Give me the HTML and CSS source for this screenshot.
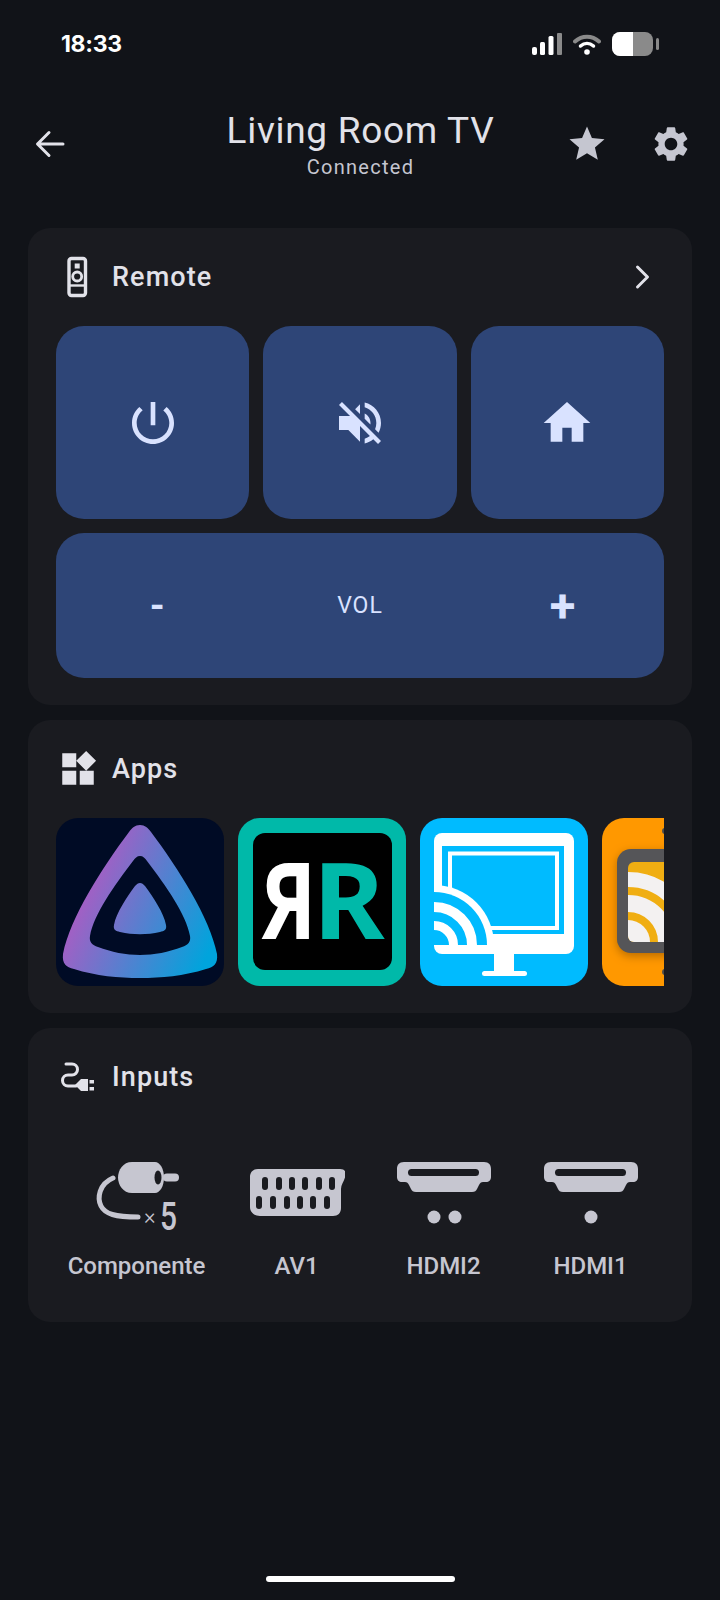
FILE: index.html
```html
<!DOCTYPE html>
<html lang="en">
<head>
    <meta charset="UTF-8">
    <meta name="viewport" content="width=device-width, initial-scale=1.0">
    <title>Living Room TV</title>
    <link rel="stylesheet" href="styles.css">
</head>
<body>
    <div class="status">
        <span class="status-time">18:33</span>
        <div class="status-icons">
            <svg class="signal" width="31" height="22" viewBox="0 0 31 22">
                <rect x="1" y="14" width="5" height="8" rx="2" fill="#fff"/>
                <rect x="9" y="9" width="5" height="13" rx="1.5" fill="#fff"/>
                <rect x="17.500" y="3" width="5" height="19" rx="1.5" fill="#fff"/>
                <rect x="26" y="0" width="5" height="22" rx="1" fill="#8a8a8a"/>
            </svg>
            <svg class="wifi" width="28" height="22" viewBox="0 0 28 22">
                <path d="M2 8.500C9 2 19 2 26 8.500" fill="none" stroke="#8a8a8a" stroke-width="4" stroke-linecap="round"/>
                <path d="M7.500 13C11.500 9.500 16.500 9.500 20.500 13" fill="none" stroke="#fff" stroke-width="3.500" stroke-linecap="round"/>
                <circle cx="14" cy="19" r="2.800" fill="#fff"/>
            </svg>
            <svg class="battery" width="47" height="24" viewBox="0 0 47 24">
                <rect width="41" height="24" rx="8" fill="#8a8a8a"/>
                <path d="M8 0H21V24H8A8 8 0 0 1 0 16V8A8 8 0 0 1 8 0Z" fill="#fff"/>
                <rect x="44" y="6" width="3" height="12" rx="1.500" fill="#8a8a8a"/>
            </svg>
        </div>
    </div>

    <header class="topbar">
        <div class="topbar-left">
            <svg class="icon-42" viewBox="0 0 42 42"><path d="M34 21H9M20 9.500L8.500 21L20 32.500" fill="none" stroke="#e2e2e9" stroke-width="3" stroke-linecap="round" stroke-linejoin="round"/></svg>
        </div>
        <div class="topbar-title">
            <h1>Living Room TV</h1>
            <p>Connected</p>
        </div>
        <div class="topbar-right">
            <svg class="icon-42" viewBox="0 0 24 24"><path fill="#c5c6d0" d="M12 17.270L18.180 21l-1.640-7.030L22 9.240l-7.190-.610L12 2 9.190 8.630 2 9.240l5.460 4.730L5.820 21z"/></svg>
            <svg class="icon-42" viewBox="0 0 24 24"><path fill="#c5c6d0" d="M19.140 12.940c.04-.3.06-.61.06-.94 0-.32-.02-.64-.07-.94l2.030-1.580c.18-.14.23-.41.12-.61l-1.920-3.320c-.12-.22-.37-.29-.59-.22l-2.390.96c-.5-.38-1.030-.7-1.620-.94l-.36-2.540c-.04-.24-.24-.41-.48-.41h-3.840c-.24 0-.43.17-.47.41l-.36 2.540c-.59.24-1.130.57-1.620.94l-2.390-.96c-.22-.08-.47 0-.59.22L2.740 8.870c-.12.21-.08.47.12.61l2.030 1.580c-.05.3-.09.63-.09.94s.02.64.07.94l-2.030 1.580c-.18.14-.23.41-.12.61l1.920 3.320c.12.22.37.29.59.22l2.390-.96c.5.38 1.030.7 1.620.94l.36 2.540c.05.24.24.41.48.41h3.840c.24 0 .44-.17.47-.41l.36-2.540c.59-.24 1.130-.56 1.620-.94l2.390.96c.22.08.47 0 .59-.22l1.920-3.320c.12-.22.07-.47-.12-.61l-2.010-1.580zM12 15.600c-1.980 0-3.600-1.620-3.600-3.600s1.620-3.600 3.600-3.600 3.600 1.620 3.600 3.600-1.620 3.600-3.600 3.600z"/></svg>
        </div>
    </header>

    <main class="cards">
        <section class="card">
            <div class="card-head">
                <svg class="icon-42" viewBox="0 0 42 42">
                    <rect x="12" y="2.500" width="16.500" height="37" rx="2.500" fill="none" stroke="#e2e2e9" stroke-width="3.400"/>
                    <rect x="17.700" y="7.500" width="5" height="5" fill="#e2e2e9"/>
                    <circle cx="20.200" cy="20.500" r="4.500" fill="none" stroke="#e2e2e9" stroke-width="2.800"/>
                    <path d="M13 29.500H27" stroke="#e2e2e9" stroke-width="2.400"/>
                </svg>
                <h2>Remote</h2>
                <svg class="icon-42 head-chevron" viewBox="0 0 42 42"><path d="M15.500 11L25.500 21L15.500 31" fill="none" stroke="#e2e2e9" stroke-width="3" stroke-linecap="round" stroke-linejoin="round"/></svg>
            </div>
            <div class="remote-grid">
                <button class="remote-btn">
                    <svg class="icon-56" viewBox="0 0 24 24"><path d="M13 3h-2v10h2V3zm4.830 2.170l-1.420 1.420C17.990 7.860 19 9.810 19 12c0 3.870-3.130 7-7 7s-7-3.130-7-7c0-2.190 1.010-4.140 2.580-5.420L6.170 5.170C4.230 6.820 3 9.260 3 12c0 4.970 4.030 9 9 9s9-4.030 9-9c0-2.740-1.230-5.180-3.170-6.830z"/></svg>
                </button>
                <button class="remote-btn">
                    <svg class="icon-56" viewBox="0 0 24 24"><path d="M16.500 12c0-1.770-1.020-3.290-2.500-4.030v2.210l2.450 2.450c.03-.2.05-.41.05-.63zm2.500 0c0 .94-.2 1.820-.54 2.640l1.510 1.510C20.630 14.910 21 13.500 21 12c0-4.280-2.990-7.860-7-8.770v2.060c2.890.86 5 3.540 5 6.710zM4.270 3L3 4.270 7.730 9H3v6h4l5 5v-6.730l4.250 4.250c-.67.52-1.420.93-2.250 1.180v2.060c1.380-.31 2.630-.95 3.690-1.810L19.730 21 21 19.730l-9-9L4.270 3zM12 4L9.910 6.090 12 8.180V4z"/></svg>
                </button>
                <button class="remote-btn">
                    <svg class="icon-56" viewBox="0 0 24 24"><path d="M10 20v-6h4v6h5v-8h3L12 3 2 12h3v8z"/></svg>
                </button>
                <div class="volume">
                    <span class="volume-minus">-</span>
                    <span class="volume-label">VOL</span>
                    <span class="volume-plus">+</span>
                </div>
            </div>
        </section>

        <section class="card">
            <div class="card-head">
                <svg class="icon-42" viewBox="0 0 24 24"><path fill="#e2e2e9" d="M13 13v8h8v-8h-8zM3 21h8v-8H3v8zM3 3v8h8V3H3zm13.660-1.310L11 7.340 16.660 13l5.660-5.660-5.660-5.650z"/></svg>
                <h2>Apps</h2>
            </div>
            <div class="app-row">
                <svg class="app-tile" viewBox="0 0 168 168">
                    <defs>
                        <linearGradient id="jelly" gradientUnits="userSpaceOnUse" x1="25" y1="70" x2="155" y2="130">
                            <stop offset="0" stop-color="#aa5cc3"/>
                            <stop offset="1" stop-color="#00a4dc"/>
                        </linearGradient>
                    </defs>
                    <rect width="168" height="168" fill="#000b25"/>
                    <path fill="url(#jelly)" fill-rule="evenodd" d="M84 7C89 7 92 10 95 14C122 50 154 100 161 136C162 146 158 149 150 151C128 158 105 160 84 160C63 160 40 158 18 151C10 149 6 146 7 136C14 100 46 50 73 14C76 10 79 7 84 7ZM84 38C81 38 79 40 77 43C58 68 38 96 34 118C33 124 36 127 42 129C55 134 70 137 84 137C98 137 113 134 126 129C132 127 135 124 134 118C130 96 110 68 91 43C89 40 87 38 84 38Z"/>
                    <path fill="url(#jelly)" d="M84 65C82 65 81 66 79 68C71 79 60 95 58 107C57 112 60 113 64 114C77 117 91 117 104 114C108 113 111 112 110 107C108 95 97 79 89 68C87 66 86 65 84 65Z"/>
                </svg>
                <svg class="app-tile" viewBox="0 0 168 168">
                    <rect width="168" height="168" fill="#00b9a9"/>
                    <rect x="15" y="15" width="139" height="137" rx="12" fill="#000"/>
                    <text class="rr-mark" transform="translate(22 121) scale(.78 1)" fill="#fff">Я</text>
                    <text class="rr-mark" transform="translate(75 121) scale(1.03 1)" fill="#00b9a9">R</text>
                </svg>
                <svg class="app-tile" viewBox="0 0 168 168">
                    <rect width="168" height="168" fill="#00bbff"/>
                    <rect x="14" y="15" width="140" height="121" rx="8" fill="#fff"/>
                    <rect x="74" y="130" width="20" height="26" fill="#fff"/>
                    <rect x="62" y="153" width="45" height="5" rx="2.500" fill="#fff"/>
                    <rect x="22" y="28" width="122" height="88" fill="#00bbff"/>
                    <rect x="30" y="35.500" width="107" height="74.500" fill="none" stroke="#fff" stroke-width="4"/>
                    <path d="M14 127V67A60 60 0 0 1 74 127Z" fill="#fff"/>
                    <path d="M14 127V74A53 53 0 0 1 67 127Z" fill="#00bbff"/>
                    <path d="M14 89A38 38 0 0 1 52 127" fill="none" stroke="#fff" stroke-width="10"/>
                    <path d="M14 107.500A19.500 19.500 0 0 1 33.500 127" fill="none" stroke="#fff" stroke-width="9"/>
                </svg>
                <svg class="app-tile" viewBox="0 0 168 168">
                    <rect width="168" height="168" fill="#ff9800"/>
                    <circle cx="63" cy="13" r="3" fill="#4c4c4c"/>
                    <circle cx="63" cy="154" r="3" fill="#4c4c4c"/>
                    <g class="rss-frame">
                        <rect x="15" y="31" width="138" height="104" rx="14" fill="#555558"/>
                    </g>
                    <rect x="26" y="44" width="116" height="80" rx="6" fill="#f0ae12"/>
                    <path d="M26 61.500A62.500 62.500 0 0 1 88.500 124" fill="none" stroke="#f3f1f1" stroke-width="15"/>
                    <path d="M26 85.500A38.500 38.500 0 0 1 64.500 124" fill="none" stroke="#f3f1f1" stroke-width="17"/>
                    <path d="M26 102V118A6 6 0 0 0 32 124H48A22 22 0 0 0 26 102Z" fill="#f3f1f1"/>
                </svg>
            </div>
        </section>

        <section class="card">
            <div class="card-head">
                <svg class="icon-42" viewBox="0 0 42 42">
                    <g transform="translate(4 6)">
                        <path d="M5 2H11A5 5 0 0 1 11 13H7A5.500 5.500 0 0 0 7 24H15" fill="none" stroke="#e2e2e9" stroke-width="3" stroke-linecap="round"/>
                        <path d="M14 23L20 17H27V29H20Z" fill="#e2e2e9"/>
                        <rect x="28.500" y="18" width="4.500" height="3.500" fill="#e2e2e9"/>
                        <rect x="28.500" y="25" width="4.500" height="3.500" fill="#e2e2e9"/>
                    </g>
                </svg>
                <h2>Inputs</h2>
            </div>
            <div class="input-grid">
                <div class="input-item">
                    <svg class="input-icon" viewBox="0 0 96 84">
                        <path d="M24 18C10 24 8 38 12 46C16 54 26 57 49 57" fill="none" stroke="#c6c6d0" stroke-width="5" stroke-linecap="round"/>
                        <path d="M43 2H66C71 2 75 9 75 17.500C75 26 71 33 66 33H43C34 33 29 25 29 17.500C29 10 34 2 43 2Z" fill="#c6c6d0"/>
                        <rect x="74" y="13.500" width="16" height="8" rx="4" fill="#c6c6d0"/>
                        <ellipse cx="69" cy="17.500" rx="3.500" ry="7" fill="#1a1b20"/>
                        <text class="x-times" x="55" y="64">×</text>
                        <text class="x-count" x="71" y="70" textLength="17" lengthAdjust="spacingAndGlyphs">5</text>
                    </svg>
                    <span>Componente</span>
                </div>
                <div class="input-item">
                    <svg class="input-icon" viewBox="0 0 96 84">
                        <path d="M9 9H91C95 9 97 11 96.500 15C96 20 92 24 92 29V48C92 53 89 56 84 56H11C5 56 1 52 1 47V17C1 12 4 9 9 9Z" fill="#c6c6d0"/>
                        <g fill="#1a1b20">
                            <rect x="13" y="17" width="6" height="13" rx="3"/>
                            <rect x="27" y="17" width="6" height="13" rx="3"/>
                            <rect x="40" y="17" width="6" height="13" rx="3"/>
                            <rect x="53" y="17" width="6" height="13" rx="3"/>
                            <rect x="67" y="17" width="6" height="13" rx="3"/>
                            <rect x="80" y="17" width="6" height="13" rx="3"/>
                            <rect x="7" y="36" width="6" height="13" rx="3"/>
                            <rect x="21" y="36" width="6" height="13" rx="3"/>
                            <rect x="35" y="36" width="6" height="13" rx="3"/>
                            <rect x="48" y="36" width="6" height="13" rx="3"/>
                            <rect x="61" y="36" width="6" height="13" rx="3"/>
                            <rect x="75" y="36" width="6" height="13" rx="3"/>
                        </g>
                    </svg>
                    <span>AV1</span>
                </div>
                <div class="input-item">
                    <svg class="input-icon" viewBox="0 0 96 84">
                        <path d="M8 2H88C93 2 95 5 95 9V17C95 20 93 22 90 22H87C85 22 84 23 83 25L81 29C80 31 79 32 76 32H20C17 32 16 31 15 29L13 25C12 23 11 22 9 22H6C3 22 1 20 1 17V9C1 5 3 2 8 2Z" fill="#c6c6d0"/>
                        <rect x="12" y="9" width="71" height="7" rx="3.500" fill="#1a1b20"/>
                        <circle cx="38" cy="57" r="6.500" fill="#c6c6d0"/>
                        <circle cx="59" cy="57" r="6.500" fill="#c6c6d0"/>
                    </svg>
                    <span>HDMI2</span>
                </div>
                <div class="input-item">
                    <svg class="input-icon" viewBox="0 0 96 84">
                        <path d="M8 2H88C93 2 95 5 95 9V17C95 20 93 22 90 22H87C85 22 84 23 83 25L81 29C80 31 79 32 76 32H20C17 32 16 31 15 29L13 25C12 23 11 22 9 22H6C3 22 1 20 1 17V9C1 5 3 2 8 2Z" fill="#c6c6d0"/>
                        <rect x="12" y="9" width="71" height="7" rx="3.500" fill="#1a1b20"/>
                        <circle cx="48" cy="57" r="6.500" fill="#c6c6d0"/>
                    </svg>
                    <span>HDMI1</span>
                </div>
            </div>
        </section>
    </main>

    <div class="home-bar"></div>
</body>
</html>
```

FILE: styles.css
```css
body {
    margin: 0;
    height: 1600px;
    overflow: hidden;
    background-color: #111318;
    color: #e2e2e9;
    font-family: Roboto, "Liberation Sans", sans-serif;
}
h1, h2, p {
    margin: 0;
    font-weight: 400;
}
svg {
    display: block;
    flex-shrink: 0;
}
.icon-42 {
    width: 42px;
    height: 42px;
}
.icon-56 {
    width: 56px;
    height: 56px;
    fill: #d9e2ff;
}

.status {
    display: flex;
    justify-content: space-between;
    align-items: center;
    height: 88px;
    padding: 0 61px;
}
.status-time {
    color: #fff;
    font-family: Inter, sans-serif;
    font-size: 23px;
    font-weight: 700;
    letter-spacing: -0.3px;
}
.status-icons {
    display: flex;
    align-items: center;
    gap: 11px;
}

.topbar {
    display: grid;
    grid-template-columns: 1fr auto 1fr;
    align-items: center;
    height: 112px;
    padding: 0 28px 0 29px;
}
.topbar-right {
    display: flex;
    justify-content: flex-end;
    gap: 42px;
}
.topbar-title {
    text-align: center;
}
.topbar-title h1 {
    font-size: 37px;
    line-height: 42px;
    letter-spacing: 0.7px;
}
.topbar-title p {
    margin-top: 3px;
    color: #c5c6d0;
    font-size: 20px;
    line-height: 24px;
    letter-spacing: 1.3px;
}

.cards {
    display: flex;
    flex-direction: column;
    gap: 15px;
    padding: 28px 28px 0;
}
.card {
    padding: 28px 28px 27px;
    background-color: #1a1b20;
    border-radius: 22px;
}
.card-head {
    display: flex;
    align-items: center;
    gap: 13px;
    height: 42px;
    padding-left: 1px;
    margin-bottom: 28px;
}
.card-head h2 {
    font-size: 27px;
    font-weight: 500;
    letter-spacing: 1.1px;
}
.head-chevron {
    margin-left: auto;
}

.remote-grid {
    display: grid;
    grid-template-columns: repeat(3, 1fr);
    gap: 14px;
}
.remote-btn {
    display: flex;
    justify-content: center;
    align-items: center;
    height: 193px;
    padding: 0;
    border: none;
    background-color: #2e4577;
    border-radius: 28px;
}
.volume {
    grid-column: 1 / 4;
    display: grid;
    grid-template-columns: repeat(3, 1fr);
    align-items: center;
    height: 145px;
    background-color: #2e4577;
    border-radius: 28px;
    color: #d9e2ff;
    text-align: center;
}
.volume-label {
    font-size: 23px;
    letter-spacing: 1px;
}
.volume-minus {
    font-size: 38px;
    line-height: 44px;
    font-weight: 700;
}
.volume-plus {
    font-size: 47px;
    line-height: 44px;
    font-weight: 700;
}

.app-row {
    display: flex;
    gap: 14px;
    overflow: hidden;
}
.app-tile {
    width: 168px;
    height: 168px;
    flex: 0 0 168px;
    border-radius: 22px;
}
.rr-mark {
    font-family: "Noto Sans", sans-serif;
    font-size: 106px;
    font-weight: 700;
}
.rss-frame {
    filter: drop-shadow(0 3px 5px #b56a00);
}

.input-grid {
    display: grid;
    grid-template-columns: 173px repeat(3, 147px);
    margin: 62px 0 15px -6px;
}
.input-item {
    display: flex;
    flex-direction: column;
    align-items: center;
    color: #c6c6d0;
    font-size: 24px;
    font-weight: 500;
    line-height: 28px;
}
.input-icon {
    width: 96px;
    height: 84px;
    margin-bottom: 8px;
}
.x-times {
    fill: #c6c6d0;
    font-size: 22px;
    font-weight: 300;
}
.x-count {
    fill: #c6c6d0;
    font-size: 39px;
}

.home-bar {
    width: 189px;
    height: 6px;
    margin: 254px auto 0;
    background-color: #fff;
    border-radius: 3px;
}
```
